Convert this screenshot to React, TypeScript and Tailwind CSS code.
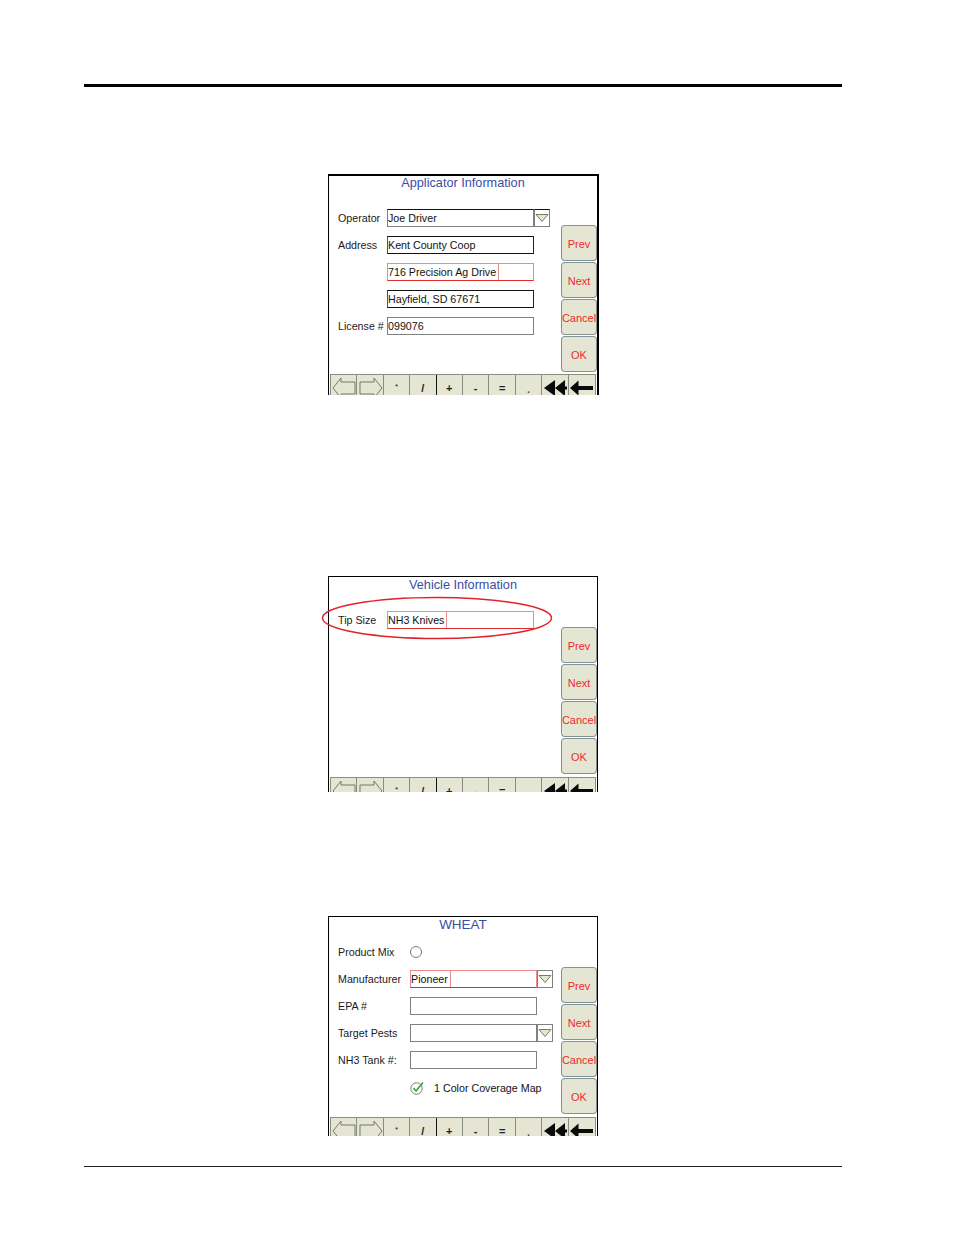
import { ReactNode } from "react";

const sans = "font-['Liberation_Sans',Arial,sans-serif]";

function Triangle() {
  return (
    <svg width="14" height="10" viewBox="0 0 14 10">
      <path d="M1 1.5 H13 L7 8.5 Z" fill="#e6e7c8" stroke="#77796a" strokeWidth="1" />
    </svg>
  );
}

// text input as shown on the display, selected ones get the red outline
function Field({
  value,
  tone = "gray",
  width,
  dropdown,
}: {
  value?: string;
  tone?: "gray" | "dark" | "top" | "red";
  width: string;
  dropdown?: boolean;
}) {
  const border =
    tone === "red"
      ? "border border-[#f08a8a] border-b-[#e22c2c]"
      : tone === "dark"
        ? "border border-[#555] border-y-[#111] border-r-[#222]"
        : tone === "top"
          ? "border border-[#808080] border-t-[#111]"
          : "border border-[#808080]";

  return (
    <div className="flex h-[18px]">
      <div className={`${width} h-[18px] ${border} flex items-center bg-white`}>
        {tone === "red" ? (
          <span className="h-full pt-px pr-[2px] border-r border-[#f08a8a] flex items-center">{value}</span>
        ) : (
          <span className="pt-px">{value}</span>
        )}
      </div>
      {dropdown && (
        <div
          className={`w-[16px] h-[18px] border border-l-[#808080] border-[#808080] flex items-center justify-center ${
            tone === "top" ? "border-t-[#111]" : ""
          }`}
        >
          <Triangle />
        </div>
      )}
    </div>
  );
}

function Row({ label, labelWidth, children }: { label: string; labelWidth: string; children: ReactNode }) {
  return (
    <div className="flex items-center h-[18px]">
      <div className={`${labelWidth} shrink-0 pt-px text-[#1a1a1a]`}>{label}</div>
      {children}
    </div>
  );
}

function SideButton({ label }: { label: string }) {
  return (
    <div className="w-[36px] h-[36px] pt-[2px] rounded-[4px] bg-[#e4e5d2] border border-[#86908c] border-t-[#7d96a0] flex items-center justify-center text-[11px] text-[#ee2a2a] whitespace-nowrap">
      {label}
    </div>
  );
}

function ToolCell({ children, last, dark }: { children: ReactNode; last?: boolean; dark?: boolean }) {
  return (
    <div
      className={`h-[26px] flex justify-center items-center text-[11px] font-bold text-[#222] ${
        last ? "" : dark ? "border-r border-[#111]" : "border-r border-[#8a8c80]"
      }`}
    >
      {children}
    </div>
  );
}

function Toolbar() {
  return (
    <div className="mx-px grid grid-cols-10 h-[26px] bg-[#e4e5d2] border-t border-x border-[#8a8c80]">
      <ToolCell>
        <svg width="25" height="26" viewBox="0 0 25 26">
          <path d="M2 13 L10 3 V7 H24 V19 H10 V23 Z" fill="none" stroke="#77796a" strokeWidth="1" />
        </svg>
      </ToolCell>
      <ToolCell>
        <svg width="25" height="26" viewBox="0 0 25 26">
          <path d="M24 13 L16 3 V7 H2 V19 H16 V23 Z" fill="none" stroke="#77796a" strokeWidth="1" />
        </svg>
      </ToolCell>
      <ToolCell><span className="-mt-[2px] text-[8px] font-normal">*</span></ToolCell>
      <ToolCell dark>/</ToolCell>
      <ToolCell>+</ToolCell>
      <ToolCell>-</ToolCell>
      <ToolCell>=</ToolCell>
      <ToolCell><span className="mt-[3px] text-[#555]">.</span></ToolCell>
      <ToolCell>
        <svg width="25" height="26" viewBox="0 0 25 26">
          <path d="M2 13 L13 5 V21 Z M13 13 L23 5 V11.5 H25 V14.5 H23 V21 Z" fill="#0a0a0a" />
        </svg>
      </ToolCell>
      <ToolCell last>
        <svg width="25" height="26" viewBox="0 0 25 26">
          <path d="M1 13 L9.5 5.5 V11 H24 V15 H9.5 V20.5 Z" fill="#0a0a0a" />
        </svg>
      </ToolCell>
    </div>
  );
}

function Screen({
  title,
  titleClass,
  frame,
  height,
  bodyHeight,
  children,
  overlay,
}: {
  title: string;
  titleClass: string;
  frame: string;
  height: string;
  bodyHeight: string;
  children: ReactNode;
  overlay?: ReactNode;
}) {
  return (
    <div className={`relative ${height} ${frame} border-black flex flex-col ml-[328px]`}>
      <div className={`${titleClass} text-center leading-[15px] text-[#3b4ca6]`}>{title}</div>
      <div className={`${bodyHeight} shrink-0 flex justify-between`}>
        {children}
        <div className="pt-[33px] flex flex-col gap-px">
          <SideButton label="Prev" />
          <SideButton label="Next" />
          <SideButton label="Cancel" />
          <SideButton label="OK" />
        </div>
      </div>
      <div className="flex-1 min-h-0 overflow-hidden">
        <Toolbar />
      </div>
      {overlay}
    </div>
  );
}

export default function App() {
  return (
    <div className={`relative w-[954px] h-[1235px] bg-white overflow-hidden text-[10.7px] text-[#111] ${sans}`}>
      <div className="ml-[84px] mt-[84px] w-[758px] h-[3px] bg-black" />

      <div className="mt-[87px]">
        <Screen
          title="Applicator Information"
          titleClass="h-[16px] text-[12.7px]"
          frame="w-[271px] border-t-2 border-l border-r-2"
          height="h-[221px]"
          bodyHeight="h-[182px]"
        >
          <div className="pl-[9px] pt-[17px] flex flex-col gap-[9px]">
            <Row label="Operator" labelWidth="w-[49px]">
              <Field value="Joe Driver" tone="top" width="w-[147px]" dropdown />
            </Row>
            <Row label="Address" labelWidth="w-[49px]">
              <Field value="Kent County Coop" tone="dark" width="w-[147px]" />
            </Row>
            <Row label="" labelWidth="w-[49px]">
              <Field value="716 Precision Ag Drive" tone="red" width="w-[147px]" />
            </Row>
            <Row label="" labelWidth="w-[49px]">
              <Field value="Hayfield, SD 67671" tone="dark" width="w-[147px]" />
            </Row>
            <Row label="License #" labelWidth="w-[49px]">
              <Field value="099076" width="w-[147px]" />
            </Row>
          </div>
        </Screen>
      </div>

      <div className="mt-[181px]">
        <Screen
          title="Vehicle Information"
          titleClass="h-[17px] pt-px text-[12.7px]"
          frame="w-[270px] border-t border-x"
          height="h-[216px]"
          bodyHeight="h-[183px]"
          overlay={
            <svg className="absolute left-[-8px] top-[19px]" width="232" height="44" viewBox="0 0 232 44">
              <ellipse cx="116" cy="22" rx="114.5" ry="20.5" fill="none" stroke="#e2222a" strokeWidth="1.5" />
            </svg>
          }
        >
          <div className="pl-[9px] pt-[17px]">
            <Row label="Tip Size" labelWidth="w-[49px]">
              <Field value="NH3 Knives" tone="red" width="w-[147px]" />
            </Row>
          </div>
        </Screen>
      </div>

      <div className="mt-[124px]">
        <Screen
          title="WHEAT"
          titleClass="h-[17px] text-[13.5px]"
          frame="w-[270px] border-t border-x"
          height="h-[220px]"
          bodyHeight="h-[183px]"
        >
          <div className="pl-[9px] pt-[9px] flex flex-col gap-[9px]">
            <Row label="Product Mix" labelWidth="w-[72px]">
              <div className="w-[12px] h-[12px] rounded-full border border-[#777]" />
            </Row>
            <Row label="Manufacturer" labelWidth="w-[72px]">
              <Field value="Pioneer" tone="red" width="w-[127px]" dropdown />
            </Row>
            <Row label="EPA #" labelWidth="w-[72px]">
              <Field width="w-[127px]" />
            </Row>
            <Row label="Target Pests" labelWidth="w-[72px]">
              <Field width="w-[127px]" dropdown />
            </Row>
            <Row label="NH3 Tank #:" labelWidth="w-[72px]">
              <Field width="w-[127px]" />
            </Row>
            <Row label="" labelWidth="w-[72px]">
              <div className="flex items-center gap-[10px] mt-[2px]">
                <svg width="14" height="14" viewBox="0 0 14 14">
                  <circle cx="6.5" cy="7.5" r="5.7" fill="none" stroke="#777" strokeWidth="1" />
                  <path d="M3.5 7 L6 10 L13 1.5" fill="none" stroke="#37a83c" strokeWidth="1.7" />
                </svg>
                <span>1 Color Coverage Map</span>
              </div>
            </Row>
          </div>
        </Screen>
      </div>

      <div className="ml-[84px] mt-[30px] w-[758px] h-px bg-[#222]" />
    </div>
  );
}
